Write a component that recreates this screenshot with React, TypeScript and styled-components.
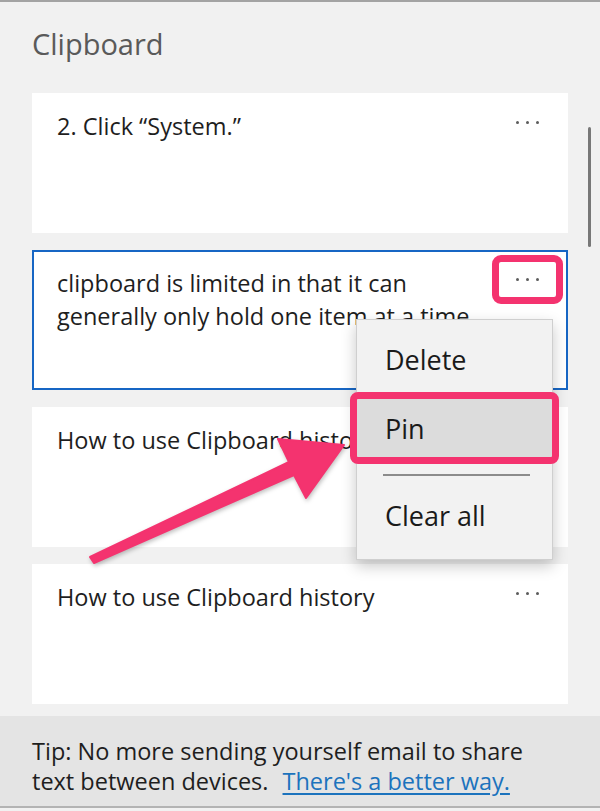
import React from "react";
import styled, { createGlobalStyle } from "styled-components";

const PINK = "#f4336f";

const GlobalStyle = createGlobalStyle`
  html, body { margin: 0; padding: 0; background: #f6f6f6; }
  body { font-family: "Open Sans", "Noto Sans", "DejaVu Sans", sans-serif; }
  #root { width: 600px; }
`;

const Panel = styled.div`
  position: relative;
  width: 600px;
  height: 811px;
  box-sizing: border-box;
  background: #f1f1f1;
  border-top: 2px solid #a3a3a3;
  display: flex;
  flex-direction: column;
  overflow: hidden;
`;

const Title = styled.h1`
  margin: 0;
  height: 91px;
  box-sizing: border-box;
  padding: 22px 0 0 32px;
  font-size: 29px;
  line-height: 40px;
  font-weight: 400;
  color: #5a5a5a;
`;

const List = styled.div`
  display: flex;
  flex-direction: column;
  gap: 17px;
  padding: 0 32px;
`;

const Card = styled.div<{ $selected?: boolean }>`
  position: relative;
  height: 140px;
  box-sizing: border-box;
  background: #ffffff;
  border: 2px solid ${(p) => (p.$selected ? "#1766c4" : "#ffffff")};
  padding: 15px 80px 0 23px;
  font-size: 23.5px;
  line-height: 33px;
  color: #1e1e1e;
  white-space: nowrap;
`;

const MoreButton = styled.div<{ $highlighted?: boolean }>`
  position: absolute;
  top: 10px;
  right: 10px;
  width: 57px;
  height: 35px;
  display: flex;
  align-items: center;
  justify-content: center;
  gap: 7px;
  background: #ffffff;
  border-radius: 2px;
  outline: ${(p) => (p.$highlighted ? `7px solid ${PINK}` : "none")};
`;

const Dot = styled.span`
  width: 3px;
  height: 3px;
  border-radius: 50%;
  background: #5c5c5c;
`;

const Footer = styled.div`
  margin-top: 12px;
  height: 92px;
  box-sizing: border-box;
  background: #e4e4e4;
  border-bottom: 2px solid #b3b3b3;
  padding: 20px 32px 0;
  font-size: 23.5px;
  line-height: 30px;
  color: #1e1e1e;
  white-space: nowrap;
`;

const Link = styled.a`
  margin-left: 14px;
  color: #1c73bd;
  text-decoration: underline;
  text-underline-offset: 3px;
`;

const Scrollbar = styled.div`
  position: absolute;
  left: 588px;
  top: 125px;
  width: 3px;
  height: 120px;
  border-radius: 2px;
  background: #787878;
`;

const Menu = styled.div`
  position: absolute;
  left: 356px;
  top: 317px;
  width: 197px;
  height: 241px;
  box-sizing: border-box;
  border: 1px solid #cfcfcf;
  background: #f2f2f2;
  box-shadow: 0 6px 14px rgba(0, 0, 0, 0.22);
  padding-top: 6px;
  display: flex;
  flex-direction: column;
  z-index: 3;
`;

const MenuItem = styled.div<{ $height?: number; $highlighted?: boolean; $grow?: boolean; $lift?: number }>`
  display: flex;
  align-items: center;
  box-sizing: border-box;
  padding-left: 28px;
  padding-bottom: ${(p) => p.$lift ?? 0}px;
  height: ${(p) => (p.$height ? `${p.$height}px` : "auto")};
  flex: ${(p) => (p.$grow ? 1 : "none")};
  font-size: 27px;
  color: #1a1a1a;
  background: ${(p) => (p.$highlighted ? "#dcdcdc" : "transparent")};
  outline: ${(p) => (p.$highlighted ? `7px solid ${PINK}` : "none")};
  border-radius: 1px;
`;

const Separator = styled.div`
  height: 2px;
  margin: 17px 22px 0 26px;
  background: #8c8c8c;
`;

const ArrowLayer = styled.svg`
  position: absolute;
  left: 0;
  top: 0;
  width: 600px;
  height: 811px;
  pointer-events: none;
  z-index: 2;
  filter: drop-shadow(1px 2px 2px rgba(0, 0, 0, 0.25));
`;

const Dots = ({ highlighted }: { highlighted?: boolean }) => (
  <MoreButton $highlighted={highlighted}>
    <Dot />
    <Dot />
    <Dot />
  </MoreButton>
);

export default function App() {
  return (
    <>
      <GlobalStyle />
      <Panel>
        <Title>Clipboard</Title>
        <List>
          <Card>
            2. Click “System.”
            <Dots />
          </Card>
          <Card $selected>
            clipboard is limited in that it can
            <br />
            generally only hold one item at a time.
            <Dots highlighted />
          </Card>
          <Card>
            How to use Clipboard history
            <Dots />
          </Card>
          <Card>
            How to use Clipboard history
            <Dots />
          </Card>
        </List>
        <Footer>
          Tip: No more sending yourself email to share
          <br />
          text between devices.
          <Link>There's a better way.</Link>
        </Footer>
        <Scrollbar />
        <ArrowLayer viewBox="0 0 600 811">
          <polygon
            points="90,555 289,460 278,437 344,443 306,496 294,473 94,561"
            fill={PINK}
            stroke={PINK}
            strokeWidth={2}
            strokeLinejoin="round"
          />
        </ArrowLayer>
        <Menu>
          <MenuItem $height={73} $lift={6}>
            Delete
          </MenuItem>
          <MenuItem $height={58} $highlighted>
            Pin
          </MenuItem>
          <Separator />
          <MenuItem $grow $lift={4}>
            Clear all
          </MenuItem>
        </Menu>
      </Panel>
    </>
  );
}
